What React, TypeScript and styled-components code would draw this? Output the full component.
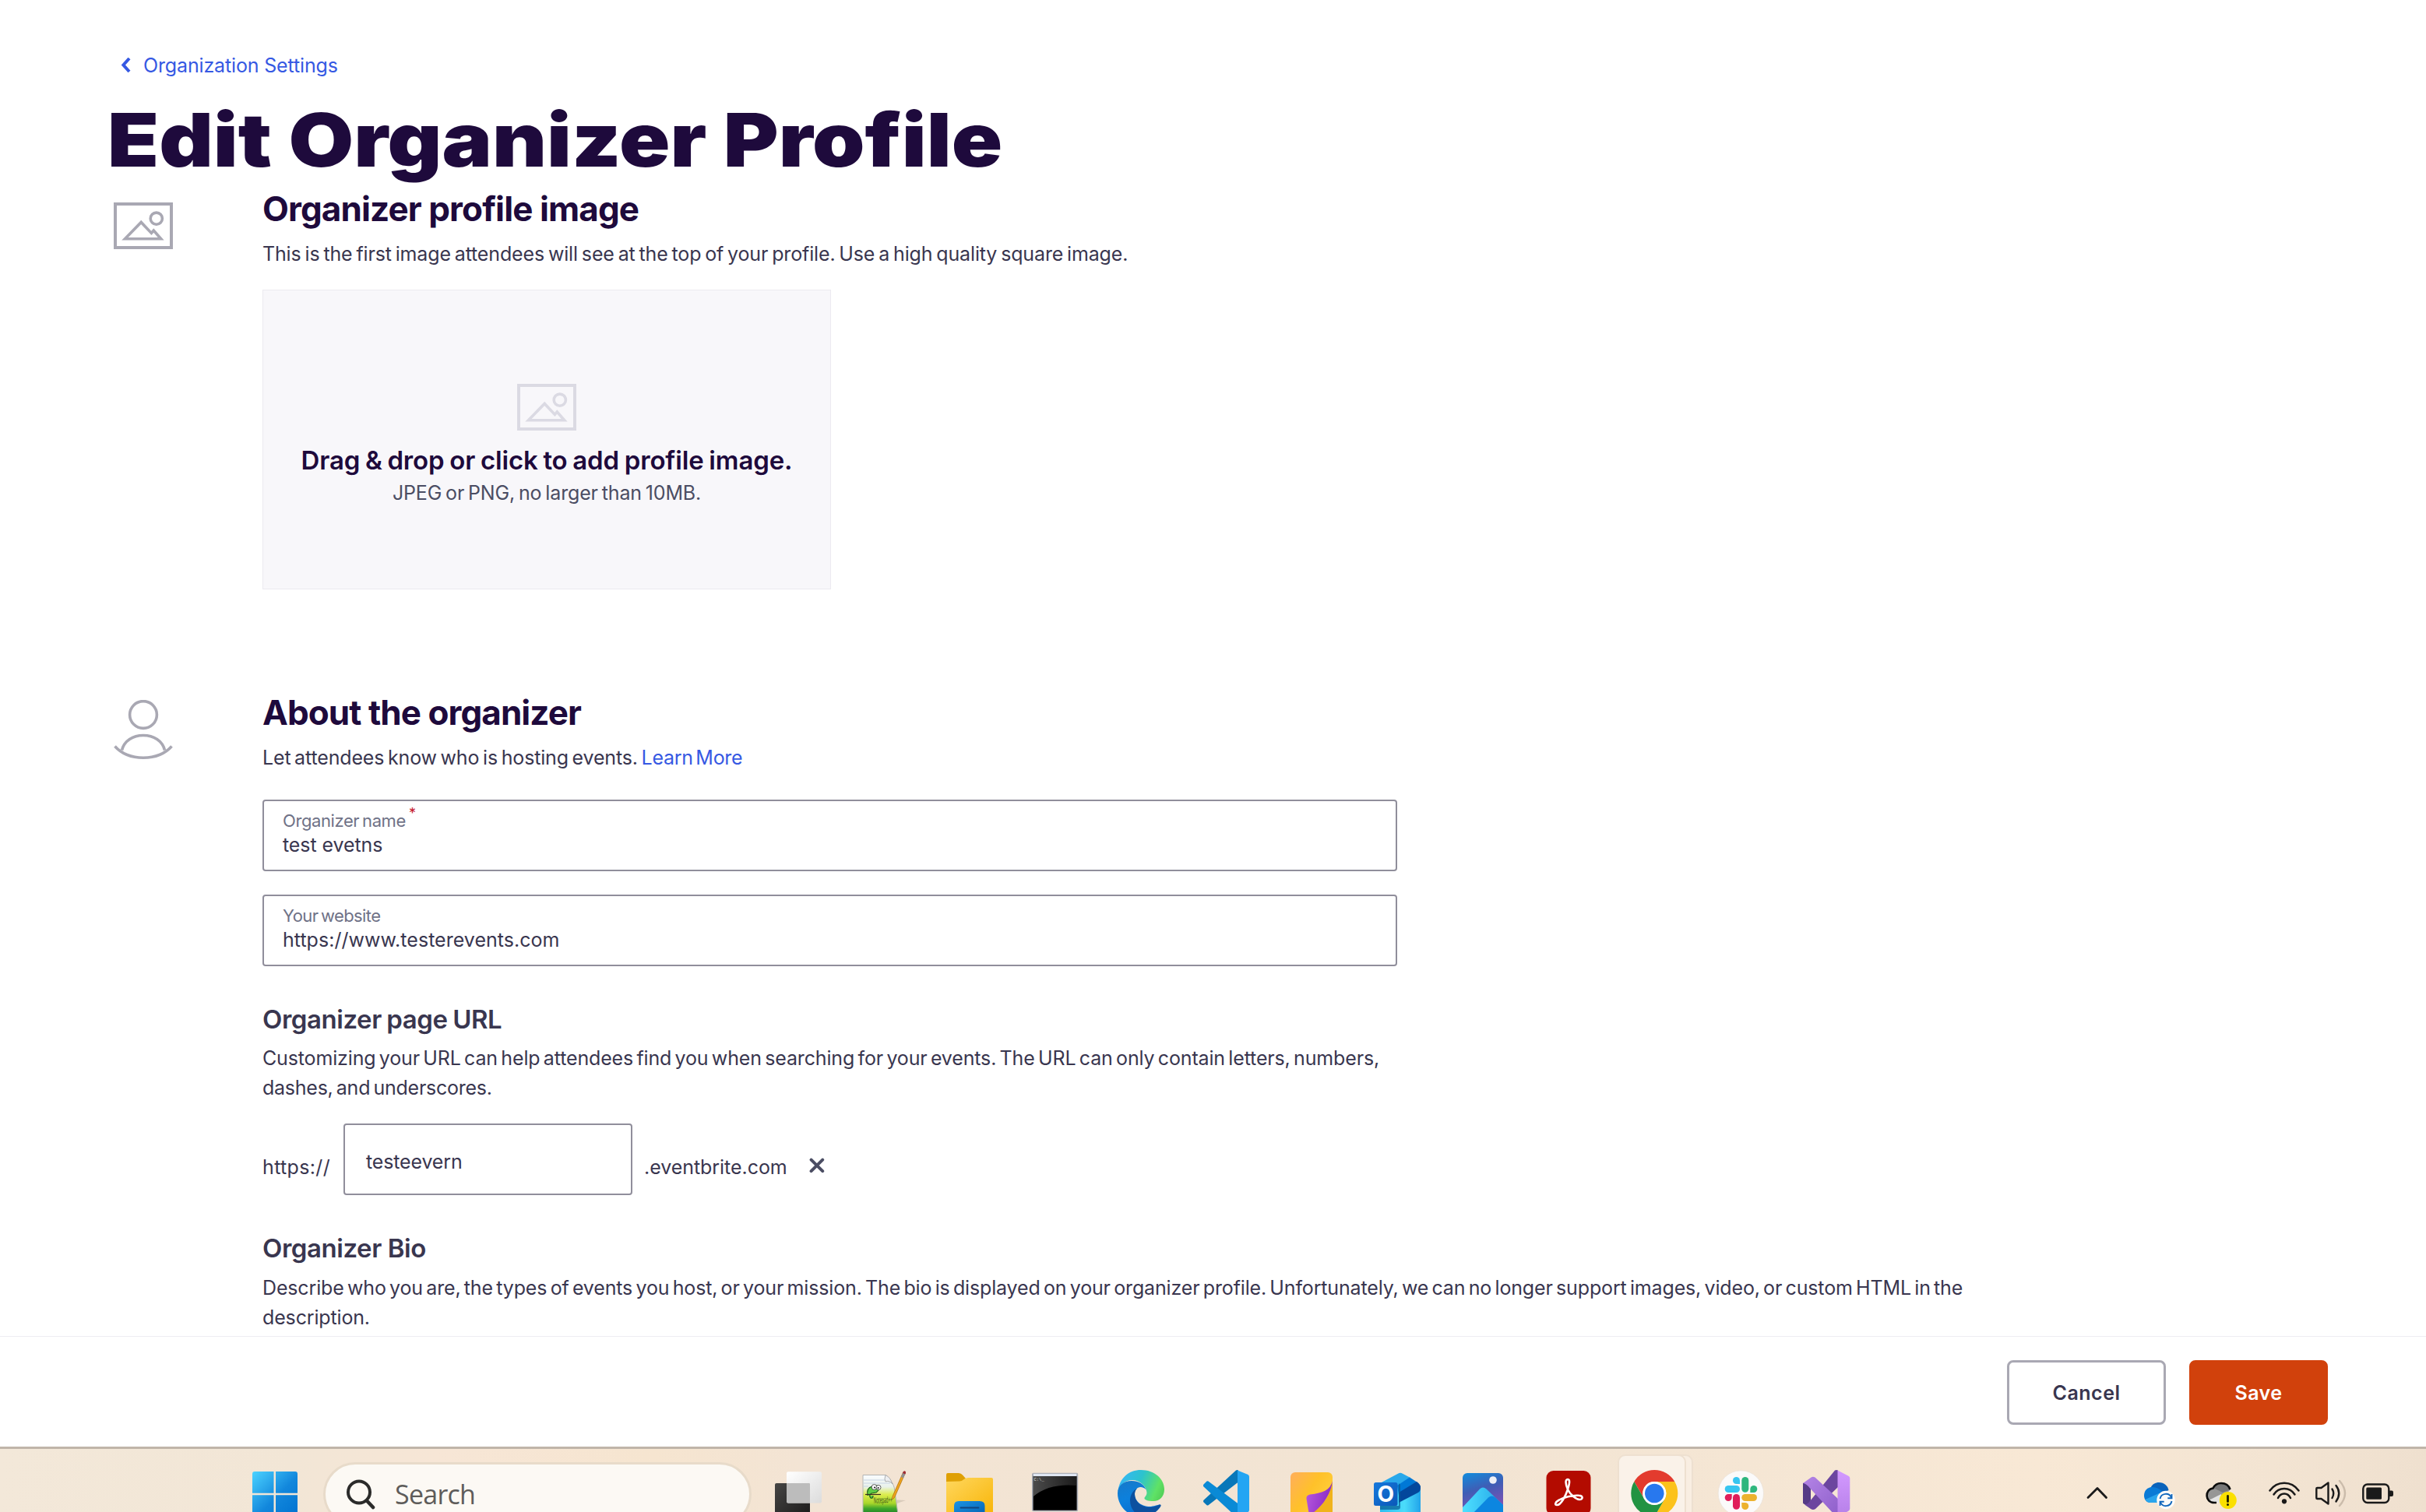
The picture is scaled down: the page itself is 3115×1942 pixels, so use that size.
import React from 'react';
import styled, { createGlobalStyle, css } from 'styled-components';

const INK = '#1e0a3c';
const BODY = '#39364f';
const LINK = '#3659e3';
const MUTED = '#a9a8b3';

const GlobalStyle = createGlobalStyle`
  html, body { margin: 0; padding: 0; background: #fff; }
  *, *::before, *::after { box-sizing: border-box; }
  body { font-family: Inter, "Liberation Sans", sans-serif; color: ${BODY}; overflow: hidden; }
  svg { display: block; flex: none; }
  h1, h2, h3, p { margin: 0; }
`;

const Screen = styled.div`
  display: flex;
  flex-direction: column;
  width: 3115px;
  height: 1942px;
  overflow: hidden;
  background: #fff;
`;

const Main = styled.main`
  flex: none;
  height: 1716px;
  padding-top: 64px;
  overflow: hidden;
`;

/* ---------- text ---------- */

type Spacing = { $ls?: number; $ws?: number };
const spacing = css<Spacing>`
  letter-spacing: ${(p) => p.$ls ?? -0.15}px;
  word-spacing: ${(p) => p.$ws ?? 0}px;
  white-space: nowrap;
`;

const BackLink = styled.a<Spacing>`
  display: flex;
  align-items: center;
  height: 40px;
  padding-left: 155px;
  gap: 15px;
  font-size: 25px;
  line-height: 40px;
  color: ${LINK};
  ${spacing}
`;

const PageTitle = styled.h1`
  width: max-content;
  height: 110px;
  margin: 21px 0 5px 138px;
  font-size: 95px;
  line-height: 110px;
  font-weight: 900;
  color: ${INK};
  letter-spacing: 0;
  white-space: nowrap;
  transform: scaleX(1.1365);
  transform-origin: left center;
`;

const SectionTitle = styled.h2<Spacing>`
  font-size: 44px;
  line-height: 56px;
  font-weight: 700;
  color: ${INK};
  ${spacing}
`;

const SubTitle = styled.h3<Spacing>`
  font-size: 33px;
  line-height: 44px;
  font-weight: 600;
  color: ${BODY};
  ${spacing}
`;

const Line = styled.p<Spacing>`
  font-size: 25px;
  line-height: 38px;
  color: ${BODY};
  ${spacing}
`;

const TextLink = styled.a<Spacing>`
  color: ${LINK};
  ${spacing}
`;

/* ---------- sections ---------- */

const Section = styled.section<{ $height?: number }>`
  display: grid;
  grid-template-columns: 191px 1fr;
  padding-left: 146px;
  ${(p) => p.$height && `height: ${p.$height}px;`}
`;

const IconColumn = styled.div<{ $top: number }>`
  padding-top: ${(p) => p.$top}px;
`;

const Stack = styled.div<{ $gap?: number; $top?: number }>`
  display: flex;
  flex-direction: column;
  align-items: flex-start;
  gap: ${(p) => p.$gap ?? 0}px;
  margin-top: ${(p) => p.$top ?? 0}px;
`;

const DropZone = styled.div`
  display: flex;
  flex-direction: column;
  align-items: center;
  width: 730px;
  height: 385px;
  margin-top: 27px;
  padding-top: 120px;
  background: #f8f7fa;
  border: 1px solid #eceaf0;
`;

const DropTitle = styled.p<Spacing>`
  margin-top: 16px;
  font-size: 33px;
  line-height: 44px;
  font-weight: 600;
  color: ${INK};
  ${spacing}
`;

const DropHint = styled.p<Spacing>`
  margin-top: 1px;
  font-size: 25px;
  line-height: 38px;
  color: #4b4d63;
  ${spacing}
`;

const Field = styled.div`
  width: 1457px;
  height: 92px;
  padding: 11px 24px 0;
  border: 2px solid #908e9b;
  border-radius: 4px;
  background: #fff;
`;

const FieldLabel = styled.div<Spacing>`
  display: flex;
  font-size: 22px;
  line-height: 28px;
  color: #6f7287;
  ${spacing}
`;

const Required = styled.span`
  margin: -6px 0 0 4px;
  font-size: 18px;
  line-height: 22px;
  color: #c5162e;
`;

const FieldValue = styled.div<Spacing>`
  margin-top: 1px;
  font-size: 25px;
  line-height: 32px;
  ${spacing}
`;

const UrlRow = styled.div`
  display: flex;
  align-items: flex-start;
  margin-top: 27px;
`;

const UrlPart = styled.span<Spacing & { $width: number }>`
  width: ${(p) => p.$width}px;
  padding-top: 37px;
  font-size: 25px;
  line-height: 38px;
  ${spacing}
`;

const UrlField = styled.div<Spacing>`
  display: flex;
  align-items: center;
  width: 371px;
  height: 92px;
  margin-right: 15px;
  padding: 5px 0 0 27px;
  border: 2px solid #908e9b;
  border-radius: 4px;
  font-size: 25px;
  line-height: 38px;
  ${spacing}
`;

const Clear = styled.span`
  padding-top: 44px;
`;

/* ---------- footer ---------- */

const Footer = styled.footer`
  display: flex;
  flex: none;
  justify-content: flex-end;
  align-items: flex-start;
  gap: 30px;
  height: 142px;
  padding: 30px 126px 0 0;
  border-top: 1px solid #eeedf2;
`;

const Button = styled.button<{ $primary?: boolean }>`
  display: flex;
  align-items: center;
  justify-content: center;
  width: ${(p) => (p.$primary ? 178 : 204)}px;
  height: 83px;
  padding: 0;
  border: 3px solid ${(p) => (p.$primary ? '#d1410c' : MUTED)};
  border-radius: 8px;
  background: ${(p) => (p.$primary ? '#d1410c' : '#fff')};
  color: ${(p) => (p.$primary ? '#fff' : BODY)};
  font: 600 25px/38px Inter, sans-serif;
  letter-spacing: 0.5px;
`;

/* ---------- taskbar ---------- */

const Taskbar = styled.div`
  display: flex;
  flex: none;
  align-items: flex-start;
  height: 84px;
  border-top: 3px solid #c0b5a9;
  overflow: hidden;
  background: linear-gradient(90deg, #f3e8d9 0%, #f2e6d6 12%, #f7e6d6 18%, #f6e5d0 27%, #f3e4d4 33%, #f2e4d3 60%, #f5e6d4 72%, #f8e8d5 84%, #f4e5d3 92%, #efe0cf 100%);
`;

const StartButton = styled.div`
  margin: 29px 33px 0 324px;
`;

const SearchBox = styled.div<Spacing>`
  display: flex;
  align-items: flex-start;
  width: 550px;
  height: 82px;
  margin: 17px 5px 0 0;
  padding: 18px 0 0 26px;
  gap: 25px;
  border: 3px solid #e8dbca;
  border-radius: 41px;
  background: #fcf9f4;
  color: #5e5c5a;
  font-family: "Open Sans", "Noto Sans", sans-serif;
  font-size: 34px;
  line-height: 40px;
  ${spacing}
`;

const AppCell = styled.div`
  position: relative;
  display: flex;
  flex: none;
  justify-content: center;
  width: 110px;
  padding-top: 27px;
  > svg { position: relative; }
`;

const ActiveTile = styled.span<{ $back?: boolean }>`
  position: absolute;
  left: ${(p) => (p.$back ? 18 : 7)}px;
  top: 7px;
  width: ${(p) => (p.$back ? 86 : 88)}px;
  height: 90px;
  border: 2px solid #eee0d0;
  border-radius: 10px;
  background: ${(p) => (p.$back ? '#f9eee2' : '#faf2e9')};
`;

const Tray = styled.div`
  display: flex;
  align-items: flex-start;
  margin-left: 279px;
  padding-top: 39px;
`;

const TrayItem = styled.div<{ $left: number }>`
  margin-left: ${(p) => p.$left}px;
`;

/* ---------- icons ---------- */

const PictureIcon = ({ color }: { color: string }) => (
  <svg width="76" height="60" viewBox="0 0 76 60" fill="none" stroke={color} strokeWidth="4">
    <rect x="2" y="2" width="72" height="56" />
    <circle cx="54.8" cy="20.7" r="7.6" strokeWidth="3.6" />
    <path d="M14.5 46.8 L35.2 25.4 L48.4 39.4 L51.3 36 L60.7 46.8 Z" strokeWidth="3.6" />
  </svg>
);

const PersonIcon = () => (
  <svg width="76" height="76" viewBox="0 0 76 76" fill="none" stroke={MUTED} strokeWidth="3.6">
    <circle cx="38" cy="19" r="17.4" />
    <path d="M10.5 64.5 C13.5 52.5 24.5 45.5 38 45.5 S62.5 52.5 65.5 64.5" />
    <path d="M1.5 59.5 C10 69 22 74.2 38 74.2 S66 69 74.5 59.5" />
  </svg>
);

const BackIcon = () => (
  <svg width="14" height="20" viewBox="0 0 14 20" fill="none" stroke={LINK} strokeWidth="4">
    <path d="M11 1 L3.4 9.5 L11 18" />
  </svg>
);

const ClearIcon = () => (
  <svg width="20" height="20" viewBox="0 0 20 20" fill="none" stroke="#4b4d63" strokeWidth="4" strokeLinecap="round">
    <path d="M2.6 2.6 L17.2 17.2 M17.2 2.6 L2.6 17.2" />
  </svg>
);

const WindowsIcon = () => (
  <svg width="58" height="58" viewBox="0 0 58 58">
    <defs>
      <linearGradient id="win" gradientUnits="userSpaceOnUse" x1="0" y1="0" x2="58" y2="58">
        <stop offset="0" stopColor="#4cd3ff" />
        <stop offset="0.55" stopColor="#1287dc" />
        <stop offset="1" stopColor="#0072d0" />
      </linearGradient>
    </defs>
    <path fill="url(#win)" d="M3 0 H27.5 V27.8 H0 V3 Q0 0 3 0Z M30 0 H55 Q58 0 58 3 V27.8 H30Z M0 30.2 H27.5 V58 H0Z M30 30.2 H58 V58 H30Z" />
  </svg>
);

const MagnifierIcon = () => (
  <svg width="38" height="42" viewBox="0 0 38 42" fill="none" stroke="#2b2b2a" strokeLinecap="round">
    <circle cx="17" cy="17.5" r="14" strokeWidth="4" />
    <path d="M27 28.5 L35 37" strokeWidth="4.6" />
  </svg>
);

const App60 = ({ children }: { children: React.ReactNode }) => (
  <svg width="60" height="60" viewBox="0 0 60 60" overflow="visible">{children}</svg>
);

const TaskViewIcon = () => (
  <App60>
    <defs>
      <linearGradient id="tvd" x1="0" y1="0" x2="1" y2="1"><stop offset="0" stopColor="#474645" /><stop offset="1" stopColor="#1c1b1b" /></linearGradient>
      <linearGradient id="tvl" x1="0" y1="0" x2="1" y2="1"><stop offset="0" stopColor="#fff" /><stop offset="1" stopColor="#dcdcdc" /></linearGradient>
    </defs>
    <rect x="0" y="17" width="45" height="41" rx="2" fill="url(#tvd)" />
    <rect x="15" y="2.3" width="45" height="40.2" rx="2" fill="url(#tvl)" />
    <path d="M15 17 H44 Q45 17 45 18 V42.5 H17 Q15 42.5 15 40.5Z" fill="#bcbcbc" />
  </App60>
);

const NotepadIcon = () => (
  <App60>
    <defs>
      <linearGradient id="npp" x1="0" y1="0" x2="0" y2="1">
        <stop offset="0" stopColor="#fafcff" /><stop offset="0.3" stopColor="#e9f2ea" /><stop offset="0.5" stopColor="#dcec4c" />
        <stop offset="0.72" stopColor="#a8d62a" /><stop offset="0.85" stopColor="#3fa62b" /><stop offset="1" stopColor="#1c7d2a" />
      </linearGradient>
    </defs>
    <path d="M38 38 L58 39 L44 44Z" fill="#d9cbbb" />
    <path d="M3 6.5 H32 L38 14 Q43 18 44 27 L48 57 H3Z" fill="url(#npp)" stroke="#b4b6b4" strokeWidth="1" />
    <path d="M4 13 H32 M4 17 H38 M4 21 H10" stroke="#c6d3e4" strokeWidth="1" />
    <path d="M32 6.5 Q30 12 32 15 Q37 13 41 18 Q38 9 32 6.5Z" fill="#eceef0" stroke="#9a9d9f" strokeWidth="0.8" />
    <path d="M9 33 Q7 23 15 21 L21 20 Q26 25 20 29 L14 30 Q10 33 13 36 Q16 37 16 33" fill="#5ecb45" stroke="#1d5c1d" strokeWidth="1.2" />
    <path d="M6 31.5 H26" stroke="#3a2a20" strokeWidth="1.2" />
    <circle cx="17.5" cy="22" r="3.4" fill="#fff" stroke="#333" strokeWidth="0.8" />
    <circle cx="23" cy="22.5" r="3" fill="#fff" stroke="#333" strokeWidth="0.8" />
    <circle cx="18" cy="22.5" r="1" fill="#111" />
    <circle cx="22.6" cy="23" r="1" fill="#111" />
    <text x="17" y="43" fontFamily="Open Sans, sans-serif" fontSize="11" fill="#2d4a14" textLength="24" lengthAdjust="spacingAndGlyphs" transform="rotate(-3 17 43)">Notepad++</text>
    <path d="M54.6 3 L57.4 4 L43.5 35.5 L40.6 38 L41 34Z" fill="#f0a41c" stroke="#a86a0c" strokeWidth="0.7" />
    <path d="M52 9 L54.6 2.6 L57.8 4 L55 10.4Z" fill="#8f8f92" />
    <path d="M54 4 Q55 .6 57 1.4 Q59 2.3 57.3 5.4Z" fill="#a12b33" />
  </App60>
);

const FolderIcon = () => (
  <App60>
    <defs>
      <linearGradient id="fold" x1="0" y1="0" x2="1" y2="1"><stop offset="0" stopColor="#ffd75e" /><stop offset="1" stopColor="#f8b508" /></linearGradient>
      <linearGradient id="fblue" x1="0" y1="0" x2="1" y2="1"><stop offset="0" stopColor="#1b94e4" /><stop offset="1" stopColor="#0560b0" /></linearGradient>
    </defs>
    <path d="M0 6 Q0 4 2 4 H16 Q19 4 21 6.5 L25 11 V18 H0Z" fill="#dfa004" />
    <path d="M0 15 L17 14.6 Q20 14.5 22 12.6 Q24.5 10 28 10 H58 Q60 10 60 12 V57 H0Z" fill="url(#fold)" />
    <path d="M10 60 V46 Q10 40 16 40 H43 Q49.5 40 49.5 46 V60Z" fill="url(#fblue)" />
    <path d="M18.5 48.5 H41.5" stroke="#12447c" strokeWidth="1.8" strokeLinecap="round" />
  </App60>
);

const TerminalIcon = () => (
  <App60>
    <defs>
      <linearGradient id="term" x1="0" y1="0" x2="1" y2="0"><stop offset="0" stopColor="#4b4b4b" /><stop offset="1" stopColor="#1b1b1b" /></linearGradient>
    </defs>
    <rect x="0.8" y="4.5" width="57.6" height="48" rx="1" fill="#000" stroke="#aeb1b9" strokeWidth="1.6" />
    <rect x="1.5" y="5" width="56.2" height="3" fill="#dfe6f2" />
    <path d="M2 8 H57 V20 Q22 17 2 34Z" fill="url(#term)" />
    <text x="2.5" y="14" fontFamily="Liberation Mono, monospace" fontSize="5.5" fill="#ddd">C:\_</text>
  </App60>
);

const EdgeIcon = () => (
  <App60>
    <defs>
      <linearGradient id="edg" x1="0" y1="0.3" x2="1" y2="0.6">
        <stop offset="0" stopColor="#37b6f6" /><stop offset="0.45" stopColor="#2cc3cd" /><stop offset="0.85" stopColor="#5fe266" /><stop offset="1" stopColor="#55d25a" />
      </linearGradient>
      <linearGradient id="edb" x1="0" y1="0" x2="0.4" y2="1"><stop offset="0" stopColor="#1779c9" /><stop offset="0.5" stopColor="#0c80dc" /><stop offset="1" stopColor="#0a6ed0" /></linearGradient>
    </defs>
    <path d="M0.5 28 C2 10 15 0 30 0 C47 0 60 11 60 25 C60 34 54 40 46 40 C39 40 34 38.5 34.5 36 C35 34 37.5 33 37.5 29 C37 20 28 13 19 13 C10 13 3 19 0.5 28Z" fill="url(#edg)" />
    <path d="M0 30 C0 20 8 14 18 14 C27 14 34 18 37 26 C35 23 32 22 29.5 22 C25 22 22 26 22 31 C22 42 33 47 41 47 C46 47 52 44.5 54 44.5 C56 45 55.5 47 54 48.5 C48 56 40 60 30 60 C13 60 0 46 0 30Z" fill="url(#edb)" />
    <path d="M25 23.5 C19 27 16 33 16 39 C16 49 22 57 31 60 C41 60 50 55 55 47 C56.5 45 55 44 53 45 C49 47 45 48 41 48 C30 48 22 40 22 31 C22 28 23 26 25 23.5Z" fill="#0d509f" />
  </App60>
);

const CodeIcon = () => (
  <App60>
    <path d="M42 0.6 Q43.5 -.4 45 .6 V15.5 L6.5 45.2 Q5.5 46 4.5 45.2 L.5 41.5 Q-.6 40 .5 38.7Z" fill="#0877b9" />
    <path d="M4.5 14.6 Q5.5 14 6.5 14.6 L45 43.5 V60 Q43 61 41.5 59.5 L.5 21.5 Q-.6 20 .5 18.5Z" fill="#0a8ad6" />
    <path d="M44 0.4 L57.5 6 Q59 7 59 8.5 V51.5 Q59 53 57.5 54 L44 60Z" fill="#24a5f3" />
  </App60>
);

const StickyIcon = () => (
  <App60>
    <defs>
      <linearGradient id="stk" x1="0" y1="0" x2="1" y2="0.7"><stop offset="0" stopColor="#ffae5c" /><stop offset="0.5" stopColor="#ffc12a" /><stop offset="1" stopColor="#ffd23e" /></linearGradient>
      <linearGradient id="stp" x1="0" y1="0" x2="1" y2="0.3"><stop offset="0" stopColor="#b95be0" /><stop offset="1" stopColor="#8b2cc4" /></linearGradient>
      <linearGradient id="sts" x1="0" y1="0" x2="1" y2="1"><stop offset="0" stopColor="#b87a0c" /><stop offset="0.6" stopColor="#f0b31c" /></linearGradient>
    </defs>
    <rect x="2" y="3" width="54" height="56" rx="6" fill="url(#stk)" />
    <path d="M56 16 C52 34 44 46 26 58 H56Z" fill="url(#sts)" />
    <path d="M56 14 C53 26 44 29.5 27 31.5 Q22 32.5 22.5 37 L26 58 C41 50 54 32 56 14Z" fill="url(#stp)" />
  </App60>
);

const OutlookIcon = () => (
  <App60>
    <defs>
      <linearGradient id="olc" x1="0" y1="0" x2="1" y2="0"><stop offset="0" stopColor="#2dbdf0" /><stop offset="0.6" stopColor="#4bdcfa" /><stop offset="1" stopColor="#22a4ea" /></linearGradient>
      <linearGradient id="olb" x1="0" y1="0" x2="1" y2="1"><stop offset="0" stopColor="#1678dc" /><stop offset="1" stopColor="#0a58b8" /></linearGradient>
    </defs>
    <path d="M7 20 H59 V54 Q59 58 54 58 H12 Q7 58 7 53Z" fill="url(#olc)" />
    <path d="M7 17 L30 4.7 Q33 3 36 4.7 L46 10 L20 28 H7Z" fill="#2aa8ea" />
    <path d="M29 20 L45 9.5 L55 16 L31 33Z" fill="#0078d6" />
    <path d="M54 15 Q59 18 59 23 Q59 27 56 29 L31 42 V29Z" fill="#03479c" />
    <path d="M7 46 H31 V17 L33 19 V48 Q33 51 29 51 H7Z" fill="#075a92" opacity="0.7" />
    <rect x="-1" y="16" width="30.5" height="30" rx="2.5" fill="url(#olb)" />
    <text x="14.2" y="41" textAnchor="middle" fontFamily="Inter, sans-serif" fontWeight="700" fontSize="28" fill="#fff">O</text>
  </App60>
);

const PhotosIcon = () => (
  <App60>
    <defs>
      <linearGradient id="pho" x1="0.2" y1="0" x2="0.5" y2="1"><stop offset="0" stopColor="#1787d8" /><stop offset="0.4" stopColor="#3f5db5" /><stop offset="1" stopColor="#8c4fb4" /></linearGradient>
      <linearGradient id="phm" x1="0" y1="0" x2="1" y2="0"><stop offset="0" stopColor="#4fe0ff" /><stop offset="1" stopColor="#22a5e8" /></linearGradient>
    </defs>
    <rect x="3" y="4" width="52" height="54" rx="6" fill="url(#pho)" />
    <path d="M3 48 L25 24.5 Q29 20.5 33.5 24.5 L55 45 V58 H3Z" fill="url(#phm)" />
    <path d="M14 58 L36 35.5 Q40.5 31.5 45 35.5 L55 45 V58Z" fill="#0c86e0" />
    <circle cx="42" cy="13" r="4.8" fill="#eef0f6" />
  </App60>
);

const AcrobatIcon = () => (
  <App60>
    <rect x="0.5" y="1" width="57" height="57" rx="9" fill="#b30b00" />
    <path d="M28 12 C24.5 12 25 18 28 25 C31 32 39 37.5 43 38 C48 38 48 33 42 32.8 C34 32 22 35.5 17 38.5 C11.5 41.5 11 45 14 45 C19 45.5 25.5 33 28 25 C30.5 17 31 12.2 28 12Z" fill="none" stroke="#fff" strokeWidth="2.6" />
  </App60>
);

const ChromeIcon = () => (
  <App60>
    <path d="M3.3 15 A30 30 0 0 1 55.3 15 H29.3 A15 15 0 0 0 16.3 37.5Z" fill="#e33b2e" />
    <path d="M55.3 15 A30 30 0 0 1 29.3 60 L42.3 37.5 A15 15 0 0 0 29.3 15Z" fill="#fcc21b" />
    <path d="M3.3 15 L16.3 37.5 A15 15 0 0 0 42.3 37.5 L29.3 60 A30 30 0 0 1 3.3 15Z" fill="#229342" />
    <circle cx="29.3" cy="30" r="15" fill="#fff" />
    <circle cx="29.3" cy="30" r="12.3" fill="#2878ee" />
  </App60>
);

const SlackIcon = () => (
  <App60>
    <circle cx="30.3" cy="30" r="29.2" fill="#fbfafa" stroke="#ebe2d8" strokeWidth="0.8" />
    <g fill="#36c5f0"><rect x="9.7" y="20" width="19.3" height="9" rx="4.5" /><path d="M24.5 9 A4.5 4.5 0 0 1 29 13.5 V18 H24.5 A4.5 4.5 0 0 1 24.5 9Z" /></g>
    <g fill="#2eb67d"><rect x="31.3" y="9" width="9" height="19.7" rx="4.5" /><path d="M51.3 24.5 A4.5 4.5 0 0 1 46.8 29 H42.3 V24.5 A4.5 4.5 0 0 1 51.3 24.5Z" /></g>
    <g fill="#ecb22e"><rect x="31.3" y="31" width="19.7" height="9" rx="4.5" /><path d="M35.8 51 A4.5 4.5 0 0 1 31.3 46.5 V42 H35.8 A4.5 4.5 0 0 1 35.8 51Z" /></g>
    <g fill="#e01e5a"><rect x="20" y="31" width="9" height="19.7" rx="4.5" /><path d="M9.7 35.5 A4.5 4.5 0 0 1 14.2 31 H18.7 V35.5 A4.5 4.5 0 0 1 9.7 35.5Z" /></g>
  </App60>
);

const StudioIcon = () => (
  <App60>
    <defs>
      <linearGradient id="vsa" x1="0" y1="0" x2="1" y2="1"><stop offset="0" stopColor="#b484e6" /><stop offset="1" stopColor="#8e5fca" /></linearGradient>
      <linearGradient id="vsr" x1="0" y1="0" x2="0" y2="1"><stop offset="0" stopColor="#d399ff" /><stop offset="1" stopColor="#b680e8" /></linearGradient>
    </defs>
    <path d="M0 17 L10 15 V39 L6 46 L1 43.5 Q0 43 0 42Z" fill="#553a86" />
    <path d="M41 0.6 Q43 -.6 45 .6 V22 L16 50 Q13 52 10 50 L2 44.5 Q6 44 9 40Z" fill="#6c469f" />
    <path d="M0 17 L11 9.2 Q13 8 15.5 9.5 L45 37 V60 L40 57 L9 23.5 Q4 17 0 17Z" fill="url(#vsa)" />
    <path d="M44.5 0.4 L59 8 Q60.3 9 60.3 10.5 V50 Q60 52 58 53 L44.5 60Z" fill="url(#vsr)" />
  </App60>
);

const TrayChevron = () => (
  <svg width="28" height="34" viewBox="0 0 28 34" fill="none" stroke="#1a1a1a" strokeWidth="2.8" strokeLinecap="round" strokeLinejoin="round">
    <path d="M2 23.5 L14 11.5 L25.5 23.5" />
  </svg>
);

const CloudSync = () => (
  <svg width="42" height="40" viewBox="0 0 42 40">
    <path d="M9 12 C11 6 16 4 20 4 C27 4 31.5 8.5 32.5 14 L20 20Z" fill="#0a63bb" />
    <path d="M8 30 C-1 29 -2 13 9 10.3 C15 9 20 12 24 15 L10 30Z" fill="#0a7ad6" />
    <path d="M2.5 26 L20 18 L34 27 V30 H9 Q4.5 30 2.5 26Z" fill="#2aa5ec" />
    <circle cx="29" cy="26.5" r="11.7" fill="#fdfcfa" />
    <g fill="none" stroke="#1268bd" strokeWidth="1.9">
      <path d="M21.5 25 A7.6 7.6 0 0 1 36 23.5 M36.5 19 V24.3 H31.3" />
      <path d="M36.5 28 A7.6 7.6 0 0 1 22 29.5 M21.5 34 V28.7 H26.7" />
    </g>
  </svg>
);

const CloudAlert = () => (
  <svg width="42" height="40" viewBox="0 0 42 40">
    <path d="M8 30 C0 29 -1 14 9 11 C12 5.5 17 4.8 20 5 C27 5.3 30.5 9 31.5 13.5 L16 30Z" fill="#969696" />
    <path d="M10 11 C13 5.5 18 5 20 5 C27 5.3 30.5 9 31.5 13.5 L22 17Z" fill="#777" />
    <path d="M4 27 L20 19 V30 H9 Q6 30 4 27Z" fill="#e3e3e3" />
    <path d="M14 30 H11 C-1 30 -1.5 13 9.5 11.5 C12 6.5 16 5 20 5 C26 5 30 8.5 31.5 13" fill="none" stroke="#0c0c0c" strokeWidth="2.6" />
    <circle cx="28.8" cy="27" r="11" fill="#fbe000" />
    <path d="M28.5 21.5 V28.5" stroke="#1a1a00" strokeWidth="2.8" strokeLinecap="round" />
    <circle cx="28.5" cy="32.5" r="1.5" fill="#1a1a00" />
  </svg>
);

const WifiIcon = () => (
  <svg width="40" height="34" viewBox="0 0 40 34" fill="none" stroke="#1a1a1a" strokeWidth="2.5" strokeLinecap="round">
    <path d="M1.5 14.5 C11 1.5 29 1.5 38.5 14.5" />
    <path d="M6.5 19.5 C13 9.5 27 9.5 33.5 19.5" />
    <path d="M12 24 C15.5 16.5 24.5 16.5 28 24" />
    <circle cx="20" cy="28.3" r="3.1" fill="#1a1a1a" stroke="none" />
  </svg>
);

const SpeakerIcon = () => (
  <svg width="40" height="36" viewBox="0 0 40 36" fill="none" stroke="#1a1a1a" strokeWidth="2.4" strokeLinecap="round" strokeLinejoin="round">
    <path d="M1.3 12 Q1.3 11 2.5 11 H7.5 L16.5 4.5 V31.5 L7.5 25 H2.5 Q1.3 25 1.3 24Z" />
    <path d="M21.5 12.5 Q25 18 21.5 24" />
    <path d="M26.5 8 Q34 18 26.5 28.5" />
    <path d="M31 2 Q45 18 31 34" stroke="#cbbcab" />
  </svg>
);

const BatteryIcon = () => (
  <svg width="42" height="34" viewBox="0 0 42 34">
    <rect x="1.3" y="6.5" width="33" height="23.5" rx="5.5" fill="none" stroke="#1a1a1a" strokeWidth="2.4" />
    <rect x="5.3" y="10.5" width="19.7" height="15.3" rx="1.5" fill="#1a1a1a" />
    <path d="M35 14.5 H38 Q40 14.5 40 16.5 V20 Q40 22 38 22 H35Z" fill="#1a1a1a" />
  </svg>
);

const APPS = [
  TaskViewIcon, NotepadIcon, FolderIcon, TerminalIcon, EdgeIcon, CodeIcon, StickyIcon,
  OutlookIcon, PhotosIcon, AcrobatIcon, ChromeIcon, SlackIcon, StudioIcon,
];

const TRAY: [React.FC, number][] = [
  [TrayChevron, 0], [CloudSync, 45], [CloudAlert, 38], [WifiIcon, 39], [SpeakerIcon, 20], [BatteryIcon, 20],
];

export default function App() {
  return (
    <>
      <GlobalStyle />
      <Screen>
        <Main>
          <BackLink $ws={0}><BackIcon />Organization Settings</BackLink>
          <PageTitle>Edit Organizer Profile</PageTitle>

          <Section $height={647}>
            <IconColumn $top={20}><PictureIcon color={MUTED} /></IconColumn>
            <Stack>
              <SectionTitle $ls={-0.9}>Organizer profile image</SectionTitle>
              <Stack $top={11}>
                <Line $ws={-1.95}>This is the first image attendees will see at the top of your profile. Use a high quality square image.</Line>
              </Stack>
              <DropZone>
                <PictureIcon color="#dbdae3" />
                <DropTitle $ws={-1.4}>Drag &amp; drop or click to add profile image.</DropTitle>
                <DropHint $ws={-2}>JPEG or PNG, no larger than 10MB.</DropHint>
              </DropZone>
            </Stack>
          </Section>

          <Section>
            <IconColumn $top={12}><PersonIcon /></IconColumn>
            <Stack>
              <SectionTitle $ls={-0.93}>About the organizer</SectionTitle>
              <Stack $top={11}>
                <Line $ws={-2.2}>
                  Let attendees know who is hosting events. <TextLink $ls={-0.3} $ws={-3}>Learn More</TextLink>
                </Line>
              </Stack>
              <Stack $top={35} $gap={30}>
                <Field>
                  <FieldLabel $ls={-0.4} $ws={-2}>Organizer name<Required>*</Required></FieldLabel>
                  <FieldValue $ls={-0.08}>test evetns</FieldValue>
                </Field>
                <Field>
                  <FieldLabel $ls={-0.6} $ws={-2}>Your website</FieldLabel>
                  <FieldValue $ls={0.03}>https://www.testerevents.com</FieldValue>
                </Field>
              </Stack>
              <Stack $top={46}>
                <SubTitle $ls={-0.45} $ws={-1.3}>Organizer page URL</SubTitle>
                <Stack $top={9}>
                  <Line $ws={-2.5}>Customizing your URL can help attendees find you when searching for your events. The URL can only contain letters, numbers,</Line>
                  <Line $ls={-0.25} $ws={-2.5}>dashes, and underscores.</Line>
                </Stack>
                <UrlRow>
                  <UrlPart $width={104} $ls={0.35}>https://</UrlPart>
                  <UrlField>testeevern</UrlField>
                  <UrlPart $width={212} $ls={-0.05}>.eventbrite.com</UrlPart>
                  <Clear><ClearIcon /></Clear>
                </UrlRow>
              </Stack>
              <Stack $top={46}>
                <SubTitle $ls={-0.45}>Organizer Bio</SubTitle>
                <Stack $top={10}>
                  <Line $ws={-2.55}>Describe who you are, the types of events you host, or your mission. The bio is displayed on your organizer profile. Unfortunately, we can no longer support images, video, or custom HTML in the</Line>
                  <Line>description.</Line>
                </Stack>
              </Stack>
            </Stack>
          </Section>
        </Main>

        <Footer>
          <Button>Cancel</Button>
          <Button $primary>Save</Button>
        </Footer>

        <Taskbar>
          <StartButton><WindowsIcon /></StartButton>
          <SearchBox $ls={-0.75}><MagnifierIcon />Search</SearchBox>
          {APPS.map((Icon, i) => (
            <AppCell key={i}>
              {Icon === ChromeIcon && <><ActiveTile $back /><ActiveTile /></>}
              <Icon />
            </AppCell>
          ))}
          <Tray>
            {TRAY.map(([Icon, left], i) => (
              <TrayItem key={i} $left={left}><Icon /></TrayItem>
            ))}
          </Tray>
        </Taskbar>
      </Screen>
    </>
  );
}
